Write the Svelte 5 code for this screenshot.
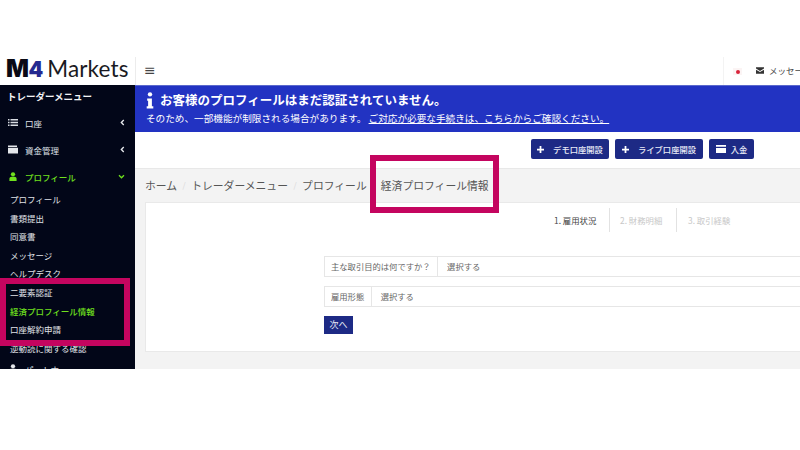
<script>
  const subs = [
    { t: 'プロフィール' }, { t: '書類提出' }, { t: '同意書' }, { t: 'メッセージ' }, { t: 'ヘルプデスク' },
    { t: '二要素認証' }, { t: '経済プロフィール情報', on: true }, { t: '口座解約申請' }, { t: '逆動読に関する確認' }
  ];
  const crumbs = ['ホーム', 'トレーダーメニュー', 'プロフィール'];
</script>

<div class="page">
  <div class="frame">
    <aside class="side">
      <div class="logo"><span class="m">M</span><span class="four">4</span><span class="mk">Markets</span></div>
      <nav class="nav">
        <div class="title">トレーダーメニュー</div>
        <div class="item">
          <svg viewBox="0 0 10 8" class="ic"><path d="M0 .5h1.5v1.4H0zM2.5.5H10v1.4H2.5zM0 3.3h1.5v1.4H0zM2.5 3.3H10v1.4H2.5zM0 6.1h1.5v1.4H0zM2.5 6.1H10v1.4H2.5z" fill="#d8dce2"/></svg>
          <span>口座</span>
          <svg viewBox="0 0 6 8" class="chev"><path d="M4.5 1 1.6 4l2.9 3" fill="none" stroke="#e8eaee" stroke-width="1.6"/></svg>
        </div>
        <div class="item">
          <svg viewBox="0 0 10 8" class="ic"><path d="M0 0h9v1.6H0zM0 2.2h10V8H0z" fill="#e4e6ea"/></svg>
          <span>資金管理</span>
          <svg viewBox="0 0 6 8" class="chev"><path d="M4.5 1 1.6 4l2.9 3" fill="none" stroke="#e8eaee" stroke-width="1.6"/></svg>
        </div>
        <div class="item green">
          <svg viewBox="0 0 10 10" class="ic"><circle cx="5" cy="2.6" r="2.4" fill="#6fe01e"/><path d="M1 10V7.400C1 6 2.200 5.200 3.200 5.200h3.600C7.800 5.200 9 6 9 7.400V10z" fill="#6fe01e"/></svg>
          <span>プロフィール</span>
          <svg viewBox="0 0 8 6" class="chev down"><path d="M1 1.500 4 4.500l3-3" fill="none" stroke="#6fe01e" stroke-width="1.600"/></svg>
        </div>
        <ul class="subs">
          {#each subs as s}
            <li class:on={s.on}>{s.t}</li>
          {/each}
        </ul>
        <div class="item last">
          <svg viewBox="0 0 10 10" class="ic"><circle cx="5" cy="2.600" r="2.400" fill="#e4e6ea"/><path d="M1 10V7.400C1 6 2.200 5.200 3.200 5.200h3.600C7.800 5.200 9 6 9 7.400V10z" fill="#e4e6ea"/></svg>
          <span>パートナー</span>
        </div>
      </nav>
    </aside>

    <main class="main">
      <header class="top">
        <span class="burger">≡</span>
        <div class="tools">
          <span class="flag"><i></i></span>
          <svg viewBox="0 0 10 8" class="mail"><path d="M0 0h10v1.500L5 4.500 0 1.500zM0 3l5 3 5-3v5H0z" fill="#333"/></svg>
          <span class="msg">メッセージ</span>
        </div>
      </header>

      <section class="banner">
        <div class="bhead">
          <svg viewBox="0 0 8 18" class="info"><circle cx="4" cy="2.500" r="2.300" fill="#fff"/><path d="M1 7h5v8h1.500v2.500H.5V15H2V9.200H1z" fill="#fff"/></svg>
          <strong>お客様のプロフィールはまだ認証されていません。</strong>
        </div>
        <p>そのため、一部機能が制限される場合があります。 <u>ご対応が必要な手続きは、こちらからご確認ください。</u></p>
      </section>

      <div class="actions">
        <button class="act"><svg viewBox="0 0 8 8" class="plus"><path d="M3 0h2v3h3v2H5v3H3V5H0V3h3z" fill="#fff"/></svg>デモ口座開設</button>
        <button class="act"><svg viewBox="0 0 8 8" class="plus"><path d="M3 0h2v3h3v2H5v3H3V5H0V3h3z" fill="#fff"/></svg>ライブ口座開設</button>
        <button class="act dep">
          <svg viewBox="0 0 10 8" class="card"><path d="M0 0h10v1.800H0zM0 3h10v5H0z" fill="#fff"/></svg>入金
        </button>
      </div>

      <div class="content">
        <div class="crumbs">
          {#each crumbs as c}
            <span>{c}</span><span class="sep">/</span>
          {/each}
          <span>経済プロフィール情報</span>
        </div>

        <div class="panel">
          <div class="steps">
            <span class="step cur">1. 雇用状況</span>
            <span class="step">2. 財務明細</span>
            <span class="step">3. 取引経験</span>
          </div>
          <form class="form">
            <div class="row"><label for="a">主な取引目的は何ですか？</label><div id="a" class="val">選択する</div></div>
            <div class="row"><label for="b">雇用形態</label><div id="b" class="val">選択する</div></div>
            <button type="button" class="next">次へ</button>
          </form>
        </div>
      </div>
    </main>

    <div class="mark mark-side"></div>
    <div class="mark mark-crumb"></div>
  </div>
</div>

<style>
  :global(body) { margin: 0; background: #fff; }
  .page {
    width: 800px; height: 450px; padding-top: 50px; box-sizing: border-box; overflow: hidden; background: #fff;
    font-family: "Noto Sans CJK JP", "Liberation Sans", sans-serif;
  }
  .frame { position: relative; display: grid; grid-template-columns: 135px 665px; height: 319px; overflow: hidden; }

  .side { display: flex; flex-direction: column; min-width: 0; }
  .logo { height: 35px; display: flex; align-items: baseline; padding: 7px 0 0 6px; box-sizing: border-box; white-space: nowrap; line-height: 24px; }
  .m { font: 900 24px/24px Inter, "Liberation Sans", sans-serif; color: #0a0a14; letter-spacing: -.5px; }
  .four { font: 900 21px/24px Inter, "Liberation Sans", sans-serif; color: #25298f; }
  .mk { font: 400 22.500px/24px Lato, sans-serif; color: #1a1a22; letter-spacing: .15px; margin-left: 4px; }
  .nav { flex: 1; background: #020618; color: #dfe2e8; overflow: hidden; }
  .title { font-size: 9.500px; font-weight: 700; line-height: 13px; padding: 5px 0 0 7px; color: #f2f3f5; height: 14px; }
  .item { height: 27px; display: flex; align-items: center; font-size: 8.500px; padding: 0 10px 0 8px; }
  .item span { flex: 1; margin-left: 7px; }
  .title + .item { margin-top: 5px; }
  .item.last { margin-top: -2px; }
  .ic { width: 10px; height: 9px; }
  .chev { width: 5px; height: 7px; }
  .chev.down { width: 7px; height: 5px; }
  .green { color: #6fe01e; font-weight: 500; }
  .subs { list-style: none; margin: 0; padding: 0 0 0 10px; font-size: 8.500px; }
  .subs li { height: 18.600px; line-height: 18.600px; white-space: nowrap; color: #e0e3e8; }
  .subs li.on { color: #6fe01e; font-weight: 500; }

  .main { min-width: 0; display: flex; flex-direction: column; padding-top: 7px; box-sizing: border-box; }
  .top { height: 28px; display: flex; align-items: center; justify-content: space-between; padding-left: 9px; flex: none; box-shadow: inset 1px 0 0 #ececec; }
  .burger { font: 400 14px/1 "DejaVu Sans", sans-serif; color: #444; margin-top: -2px; }
  .tools { width: 77px; height: 28px; border-left: 1px solid #f3f3f3; display: flex; align-items: center; white-space: nowrap; overflow: hidden; padding-left: 9px; box-sizing: border-box; flex: none; }
  .flag { width: 9px; height: 7px; background: #fbf4f4; display: grid; place-items: center; flex: none; margin-right: 14px; margin-top: 1px; }
  .flag i { width: 4px; height: 4px; border-radius: 50%; background: #d8233a; display: block; }
  .mail { width: 8px; height: 7px; flex: none; margin-right: 5px; margin-top: -2px; }
  .msg { font-size: 8.500px; color: #444; margin-top: -2px; }

  .banner { height: 47px; flex: none; box-sizing: border-box; background: #2233c2; color: #fff; padding: 5px 0 0 11px; border-top: 1px solid #5a68cc; }
  .bhead { display: flex; align-items: center; height: 18px; }
  .info { width: 8px; height: 17px; margin-right: 6px; flex: none; }
  .bhead strong { font-size: 12.500px; font-weight: 700; line-height: 18px; white-space: nowrap; margin-top: -1px; }
  .banner p { margin: 2px 0 0; font-size: 9.650px; line-height: 14px; white-space: nowrap; }

  .actions { height: 36px; flex: none; display: flex; justify-content: flex-end; align-items: flex-start; gap: 6px; padding: 7px 46px 0 0; box-sizing: border-box; background: #fff; }
  .act { height: 20px; padding: 0; border: 0; border-radius: 2px; background: #1d2a85; color: #e8eaf6; font: 500 8.300px/20px "Noto Sans CJK JP", sans-serif; display: flex; align-items: center; justify-content: center; width: 78px; }
  .act:nth-child(2) { width: 88px; }
  .act.dep { width: 45px; }
  .plus { width: 7px; height: 7px; margin-right: 9px; }
  .card { width: 10px; height: 8px; margin-right: 5px; }

  .content { flex: 1; background: #f3f3f3; padding-left: 10px; border-top: 1px solid #e8e8e8; }
  .crumbs { height: 33px; padding-bottom: 2px; box-sizing: border-box; display: flex; align-items: center; font-size: 10.800px; color: #555; white-space: nowrap; }
  .sep { color: #d8d8d8; margin: 0 5.500px; font-size: 8px; }
  .panel { height: 150px; background: #fff; border: 1px solid #e9e9e9; border-right: 0; box-sizing: border-box; }
  .steps { height: 24px; margin-top: 5px; display: flex; padding-left: 408px; font-size: 8.400px; line-height: 24px; color: #c8c8c8; white-space: nowrap; }
  .step { border-right: 1px solid #e2e2e2; width: 66px; flex: none; box-sizing: content-box; }
  .step:first-child { width: 55px; margin-right: 10px; }
  .step:nth-child(2) { width: 56px; margin-right: 11px; }
  .step:last-child { border-right: 0; }
  .step.cur { color: #444; }
  .form { padding: 24px 0 0 178px; display: flex; flex-direction: column; align-items: flex-start; }
  .row { width: 477px; height: 21px; display: flex; border: 1px solid #e6e6e6; border-right: 0; box-sizing: border-box; font-size: 8.300px; color: #666; margin-bottom: 9px; line-height: 19px; }
  .row label { padding: 0 6.500px 0 6px; border-right: 1px solid #e6e6e6; white-space: nowrap; flex: none; }
  .val { padding-left: 9px; }
  .next { width: 29px; height: 18px; padding: 0; border: 0; background: #1d2a85; color: #e8eaf6; font: 400 9px/18px "Noto Sans CJK JP", sans-serif; }

  .mark { position: absolute; border: 6px solid #c4055f; box-sizing: border-box; pointer-events: none; }
  .mark-side { left: 0; top: 228px; width: 130px; height: 68px; }
  .mark-crumb { left: 370px; top: 105px; width: 129px; height: 58px; }
</style>
